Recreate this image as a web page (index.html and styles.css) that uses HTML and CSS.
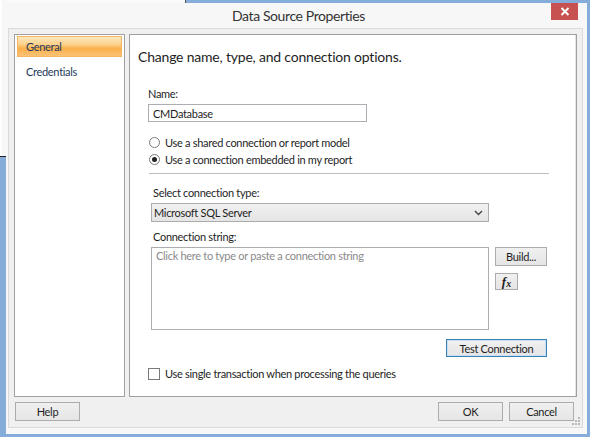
FILE: index.html
```html
<!DOCTYPE html>
<html>

<head>
  <meta charset="UTF-8">
  <title>Data Source Properties</title>
  <link rel="stylesheet" href="styles.css">
</head>

<body>
  <div class="window">
    <div class="frame">
      <div class="titlebar">
        <span class="title">Data Source Properties</span>
        <a class="close-btn">
          <svg width="10" height="9" viewBox="0 0 10 9">
            <path d="M1.5 1 L8.5 8 M8.5 1 L1.5 8" stroke="#fff" stroke-width="2" fill="none" />
          </svg>
        </a>
      </div>
      <div class="client">
        <div class="panes">
          <ul class="nav">
            <li class="nav-item nav-item-active">General</li>
            <li class="nav-item">Credentials</li>
          </ul>
          <div class="page">
            <h1 class="heading">Change name, type, and connection options.</h1>
            <div class="form">
              <div class="label">Name:</div>
              <input type="text" class="text-input" value="CMDatabase">

              <div class="radio-list">
                <label class="option">
                  <span class="radio"></span>
                  Use a shared connection or report model
                </label>
                <label class="option">
                  <span class="radio radio-checked"></span>
                  Use a connection embedded in my report
                </label>
              </div>

              <div class="separator"></div>

              <div class="group">
                <div class="label label-indent">Select connection type:</div>
                <div class="select">
                  <span>Microsoft SQL Server</span>
                  <svg width="9" height="6" viewBox="0 0 9 6">
                    <path d="M1 1 L4.5 4.5 L8 1" stroke="#444" stroke-width="1.4" fill="none" />
                  </svg>
                </div>

                <div class="label label-indent label-gap">Connection string:</div>
                <div class="conn-row">
                  <div class="textarea">Click here to type or paste a connection string</div>
                  <div class="side-buttons">
                    <a class="btn btn-build">Build...</a>
                    <a class="btn btn-fx"><i>f</i><i class="fx-x">x</i></a>
                  </div>
                </div>
                <div class="test-row">
                  <a class="btn btn-test">Test Connection</a>
                </div>
              </div>

              <label class="option option-check">
                <span class="checkbox"></span>
                Use single transaction when processing the queries
              </label>
            </div>
          </div>
        </div>
        <div class="footer">
          <a class="btn btn-footer">Help</a>
          <div class="footer-right">
            <a class="btn btn-footer">OK</a>
            <a class="btn btn-footer">Cancel</a>
          </div>
        </div>
        <svg class="grip" width="8" height="8" viewBox="0 0 8 8">
          <rect x="6" y="0" width="2" height="2" fill="#b9b9b9" />
          <rect x="3" y="3" width="2" height="2" fill="#b9b9b9" />
          <rect x="6" y="3" width="2" height="2" fill="#b9b9b9" />
          <rect x="0" y="6" width="2" height="2" fill="#b9b9b9" />
          <rect x="3" y="6" width="2" height="2" fill="#b9b9b9" />
          <rect x="6" y="6" width="2" height="2" fill="#b9b9b9" />
        </svg>
      </div>
    </div>
  </div>

  <!-- bits of the window behind, showing over the frame -->
  <div class="behind-top"></div>
  <div class="behind-left"></div>
</body>

</html>
```

FILE: styles.css
```css
html,
body {
  margin: 0;
  width: 590px;
  height: 437px;
  overflow: hidden;
}

body {
  position: relative;
  background-color: #86acd9;
  font-family: Lato, "Open Sans", sans-serif;
  font-size: 11px;
  letter-spacing: -0.3px;
  color: #1e1e1e;
}

.window {
  height: 100%;
  padding: 3px 3px 3px 6px;
  box-sizing: border-box;
}

.frame {
  height: 100%;
  display: flex;
  flex-direction: column;
  padding: 0 4px 6px 2px;
  background-color: #f7f7f7;
  box-sizing: border-box;
}

.titlebar {
  position: relative;
  height: 25px;
  flex: none;
  display: flex;
  justify-content: center;
  align-items: center;
}

.title {
  font-size: 14px;
  letter-spacing: -0.4px;
  color: #333;
  margin-left: 6px;
}

.close-btn {
  position: absolute;
  top: 0;
  right: 5px;
  width: 27px;
  height: 17px;
  display: flex;
  justify-content: center;
  align-items: center;
  background-color: #c75050;
}

.client {
  position: relative;
  flex: 1;
  display: flex;
  flex-direction: column;
  padding: 5px 5px 0 5px;
  background-color: #f0f0f0;
  border: 1px solid #dadada;
}

.panes {
  display: flex;
  gap: 4px;
  height: 363px;
}

.nav {
  list-style-type: none;
  margin: 0;
  width: 111px;
  padding: 1px 2px;
  box-sizing: border-box;
  background-color: #fff;
  border: 1px solid #a0a0a0;
}

.nav-item {
  height: 21px;
  line-height: 21px;
  padding-left: 9px;
  color: #1e395b;
  cursor: pointer;
  box-sizing: border-box;
}

.nav-item + .nav-item {
  margin-top: 4px;
}

.nav-item-active {
  border: 1px solid #f2b563;
  line-height: 20px;
  padding-left: 8px;
  background: linear-gradient(#fde8c0, #fcd089 40%, #fab04b 60%, #fbc276);
}

.page {
  flex: 1;
  padding: 12px 0 0 8px;
  background-color: #fff;
  border: 1px solid #a0a0a0;
  box-shadow: inset -1px 0 0 #e3e3e3;
}

.heading {
  margin: 0;
  font-size: 14px;
  letter-spacing: -0.2px;
  line-height: 20px;
  font-weight: normal;
  color: #1e1e1e;
}

.form {
  padding-left: 10px;
}

.label {
  margin-top: 19px;
  line-height: 15px;
}

.text-input {
  display: block;
  margin: 3px 0 0;
  width: 219px;
  height: 18px;
  padding: 0 4px;
  box-sizing: border-box;
  border: 1px solid #abadb3;
  font-family: inherit;
  font-size: 11px;
  letter-spacing: inherit;
  color: #1e1e1e;
  outline: none;
}

.radio-list {
  margin-top: 12px;
}

.option {
  display: flex;
  align-items: center;
  height: 17px;
}

.radio,
.checkbox {
  display: inline-block;
  flex: none;
  width: 11px;
  height: 11px;
  margin: 0 5px 0 1px;
  box-sizing: border-box;
  border: 1px solid #7a7a7a;
  background-color: #fff;
}

.radio {
  border-radius: 50%;
  position: relative;
}

.radio-checked::after {
  content: "";
  position: absolute;
  top: 2px;
  left: 2px;
  width: 5px;
  height: 5px;
  border-radius: 50%;
  background-color: #222;
}

.separator {
  margin: 5px 0 0 1px;
  width: 400px;
  height: 1px;
  background-color: #bdbdbd;
}

.group {
  margin-left: 3px;
  width: 396px;
}

.group .label {
  margin-top: 11px;
}

.group .label-gap {
  margin-top: 7px;
}

.label-indent {
  padding-left: 2px;
}

.select {
  margin-top: 3px;
  width: 338px;
  height: 19px;
  box-sizing: border-box;
  display: flex;
  align-items: center;
  justify-content: space-between;
  padding: 0 5px 0 2px;
  border: 1px solid #acacac;
  background: linear-gradient(#f0f0f0, #e5e5e5);
}

.conn-row {
  margin-top: 3px;
  display: flex;
  gap: 6px;
}

.textarea {
  width: 338px;
  height: 83px;
  box-sizing: border-box;
  padding: 1px 4px;
  border: 1px solid #abadb3;
  color: #8a8a8a;
}

.side-buttons {
  display: flex;
  flex-direction: column;
  align-items: flex-start;
  gap: 7px;
}

.btn {
  display: flex;
  justify-content: center;
  align-items: center;
  box-sizing: border-box;
  height: 19px;
  border: 1px solid #acacac;
  background: linear-gradient(#f0f0f0, #e5e5e5);
  color: #1e1e1e;
  cursor: pointer;
}

.btn-build {
  width: 52px;
}

.btn-fx {
  width: 23px;
  height: 17px;
  font-family: "Liberation Serif", serif;
  font-weight: bold;
  font-size: 13px;
  letter-spacing: 0;
}

.fx-x {
  font-size: 10px;
  margin-top: 3px;
}

.test-row {
  margin-top: 9px;
  display: flex;
  justify-content: flex-end;
}

.btn-test {
  width: 101px;
  height: 18px;
  border-color: #3c7fb1;
  box-shadow: inset 0 0 0 1px #c7e2f7;
}

.option-check {
  margin-top: 8px;
}

.checkbox {
  width: 12px;
  height: 12px;
  margin-left: 0;
}

.footer {
  display: flex;
  justify-content: space-between;
  padding: 5px 3px 0 1px;
}

.footer-right {
  display: flex;
  gap: 6px;
}

.btn-footer {
  width: 65px;
}

.grip {
  position: absolute;
  right: 2px;
  bottom: 2px;
}

.behind-top {
  position: absolute;
  top: 0;
  left: 0;
  width: 185px;
  height: 3px;
  background-color: #fafafa;
  border-right: 1px solid #555;
}

.behind-left {
  position: absolute;
  top: 0;
  left: 0;
  width: 6px;
  height: 156px;
  background-color: #f7f7f7;
  border-bottom: 1px solid #222;
  box-shadow: inset 2px 0 0 #fff;
}
```
